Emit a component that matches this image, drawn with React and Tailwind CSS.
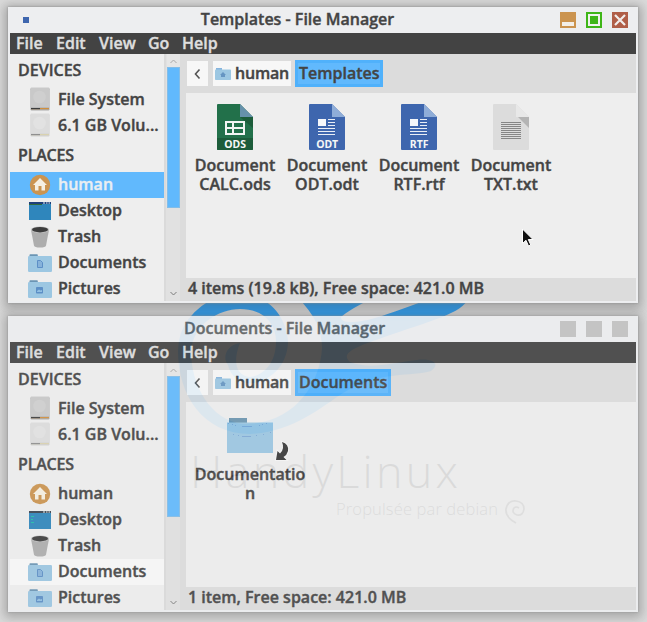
import React from "react";

function DriveIcon({ usb }) {
  return (
    <svg width="20" height="24" viewBox="0 0 20 24">
      <rect x="0.5" y="1" width="19" height="22.5" rx="1.2" fill={usb ? "#d2d2d2" : "#a9a9a9"} />
      <rect x="0.5" y="0.5" width="19" height="20" rx="1.2" fill={usb ? "#dcdcdc" : "#c9c9c9"} />
      <circle cx="9.5" cy="10" r="6.3" fill={usb ? "#e2e2e2" : "#cfcfcf"} />
      <rect x="1" y="21" width="18" height="1.2" fill={usb ? "#d9d2b0" : "#d08f3e"} />
      <rect x="1" y="21" width="9" height="1.2" fill={usb ? "#8f8f8f" : "#3c3c3c"} />
    </svg>
  );
}

function HomeIcon() {
  return (
    <svg width="22" height="22" viewBox="0 0 22 22">
      <circle cx="11" cy="11" r="10.2" fill="#cb9450" />
      <path d="M11 4L18 11H16V16.5H12.5V12H9.5V16.5H6V11H4Z" fill="#f6f0e2" />
    </svg>
  );
}

function DesktopIcon({ lines }) {
  return (
    <svg width="22" height="18" viewBox="0 0 22 18">
      <rect width="22" height="18" fill="#2f86bc" />
      <rect width="22" height="2" fill={lines ? "#3b4450" : "#1d3f7a"} />
      <path d="M14 1h2M17 1h1.5M19.5 1h1.5" stroke="#e8eef2" strokeWidth="1" />
      {lines ? <path d="M2 5.5h3M2 8.5h2M2 11.5h3" stroke="#1fbfa8" strokeWidth="1" /> : <path d="M0 2.5h13" stroke="#2f6b3a" strokeWidth="1" />}
    </svg>
  );
}

function TrashIcon() {
  return (
    <svg width="20" height="22" viewBox="0 0 20 22">
      <path d="M1 4L4 19.5Q4.5 21.5 10 21.5Q15.500 21.5 16 19.500L19 4Z" fill="#adadad" />
      <ellipse cx="10" cy="3.700" rx="9.200" ry="3.200" fill="#c2c2c2" />
      <ellipse cx="10" cy="3.700" rx="8" ry="2.700" fill="#3d3d3d" />
    </svg>
  );
}

function FolderIcon({ kind }) {
  return (
    <svg width="24" height="18" viewBox="0 0 24 18">
      <path d="M1.500 3V1Q1.500 0.300 2.200 0.300H9Q9.800 0.300 9.800 1V3Z" fill="#6b95b4" />
      <rect x="0" y="2" width="24" height="16" rx="1.200" fill="#9cc7e2" />
      {kind === "doc" ? (
        <path d="M9.500 6.500H12.500L14.500 8.500V13.500H9.500Z" fill="#86b2da" stroke="#5c8fc6" />
      ) : (
        <g>
          <rect x="8" y="7" width="7" height="6.500" rx="0.800" fill="#5c8fc6" />
          <path d="M9 11L11 9.500L12.500 10.500L14 10V12H9Z" fill="#91bfe2" />
        </g>
      )}
    </svg>
  );
}

const SIDE = [
  ["File System", () => <DriveIcon />],
  ["6.1 GB Volu...", () => <DriveIcon usb />],
];

const PLACES = [
  ["human", () => <HomeIcon />],
  ["Desktop", (lines) => <DesktopIcon lines={lines} />],
  ["Trash", () => <TrashIcon />],
  ["Documents", () => <FolderIcon kind="doc" />],
  ["Pictures", () => <FolderIcon kind="pic" />],
];

function Row({ label, icon, className = "", labelClass = "pb-[2px]" }) {
  return (
    <div className={`flex h-[26px] shrink-0 items-center ${className}`}>
      <span className="ml-[18px] flex w-6 shrink-0 items-center justify-center">{icon}</span>
      <span className={`ml-[6px] whitespace-nowrap ${labelClass}`}>{label}</span>
    </div>
  );
}

function Controls({ active }) {
  if (!active) {
    return (
      <div className="flex gap-[10px]">
        <span className="size-4 bg-[#c2c2c2]" />
        <span className="size-4 bg-[#c2c2c2]" />
        <span className="size-4 bg-[#c2c2c2]" />
      </div>
    );
  }
  return (
    <div className="flex gap-[10px]">
      <span className="flex size-4 items-end bg-[#cb9450] p-[2px]">
        <span className="h-1 w-full bg-[#f3efe9]" />
      </span>
      <span className="size-4 bg-[#3fb618] p-[2px]">
        <span className="block size-3 bg-[#f0f3ee] p-[2px]">
          <span className="block size-2 bg-[#3fb618]" />
        </span>
      </span>
      <svg width="16" height="16" className="bg-[#b05e48]">
        <path d="M3 3L13 13M13 3L3 13" stroke="#f2eeec" strokeWidth="2.200" />
      </svg>
    </div>
  );
}

function FileIcon({ type }) {
  const green = type === "ODS";
  const txt = type === "TXT";
  const base = green ? "#22704a" : txt ? "#dcdcdc" : "#3e66ae";
  return (
    <svg width="36" height="46" viewBox="0 0 36 46" className="block [-webkit-text-stroke:0]">
      <path d="M1 0H23L36 13V45Q36 46 35 46H1Q0 46 0 45V1Q0 0 1 0Z" fill={base} />
      {green && <path d="M23 13H36V24Z" fill="#1c5c3a" />}
      {txt && <path d="M25 13H36V24Z" fill="#b4b4b4" />}
      {green && <path d="M0 34H36V45Q36 46 35 46H1Q0 46 0 45Z" fill="#1c5c3a" />}
      <path d="M23 0L36 13H23Z" fill={green ? "#6691ab" : txt ? "#e8e8e8" : "#8fadd8"} />
      {green && (
        <path fillRule="evenodd" fill="#f2f5f3" d="M8 17H28V31H8ZM10 19V23H15V19ZM17 19V23H26V19ZM10 25V29H15V25ZM17 25V29H26V25Z" />
      )}
      {!green && !txt && (
        <g>
          <rect x="9" y="15" width="8" height="7" fill="#f5f7fa" />
          <path d="M19 15.500H26M19 18.500H26M19 21.500H26M9 24.500H26M9 27.500H26M9 30.500H26" stroke="#e9eef6" />
        </g>
      )}
      {txt && (
        <path d="M8 18.500H28M8 20.500H28M8 22.500H28M8 24.500H28M8 26.500H28M8 28.500H28M8 30.500H28M8 32.500H28M8 34.500H28" stroke="#868686" />
      )}
      {!txt && (
        <text x="18.200" y="44" textAnchor="middle" fill="#f5f7f6" fontFamily="Noto Sans, sans-serif" fontWeight="700" fontSize="10.500">
          {type}
        </text>
      )}
    </svg>
  );
}

function FileItem({ lines, type }) {
  return (
    <div className="flex w-[92px] flex-col items-center">
      <FileIcon type={type} />
      <div className="mt-[6px] text-center leading-[19px]">
        {lines.map((l) => (
          <div key={l} className="whitespace-nowrap">{l}</div>
        ))}
      </div>
    </div>
  );
}

function LinkedFolder() {
  return (
    <div className="flex w-[110px] flex-col items-center">
      <div className="relative h-[46px] w-12">
        <svg width="48" height="36" viewBox="0 0 48 36" className="mt-[5px] block">
          <path d="M3 0H21V6H3Z" fill="#6b95af" />
          <rect x="1" y="4.500" width="46" height="30.500" fill="#9cc7e2" />
          <path d="M16 8.500H26M16 18.500H25" stroke="#7ea9d6" />
          <path d="M2 5.500h1M6 6.500h1M9 7.500h1M33 7.500h1M36 6.500h1M40 5.500h1M7 16.500h1M12 17.500h1M30 17.500h1M37 16.500h1M44 14.500h1" stroke="#7ea9d6" />
        </svg>
        <svg width="18" height="24" viewBox="0 0 18 24" className="absolute left-[48px] top-[27px]">
          <path d="M8 2Q15 4 14 11Q13 15 9.500 17L12.500 20H2L3.500 11L6 13.500Q11 9 8 2Z" fill="#383838" stroke="#f6f6f6" strokeWidth="2" paintOrder="stroke" />
        </svg>
      </div>
      <div className="mt-[6px] text-center leading-[19px]">
        <div>Documentatio</div>
        <div>n</div>
      </div>
    </div>
  );
}

function Scrollbar() {
  return (
    <div className="flex w-4 shrink-0 flex-col items-center border-l-2 border-[#dadada] bg-[#e1e1e1]">
      <svg width="13" height="13" className="shrink-0 bg-[#e6e6e6]" fill="none" stroke="#a9a9a9">
        <path d="M3.500 9L6.500 6L9.500 9" />
      </svg>
      <div className="h-[141px] w-[13px] shrink-0 border border-[#83bde8] bg-[#61b9fd]" />
      <div className="flex-1" />
      <svg width="13" height="13" className="shrink-0" fill="none" stroke="#7c7c7c">
        <path d="M3.500 4L6.500 7L9.500 4" />
      </svg>
    </div>
  );
}

function Window({ title, active, selected, path, pathWidth, status, children }) {
  return (
    <section
      className={`flex h-[296px] w-[630px] shrink-0 flex-col bg-[#edeef0] shadow-[0_0_2px_#8c8c8c,0_2px_10px_4px_rgba(70,70,70,0.36)] ${active ? "" : "opacity-[0.91]"}`}
    >
      <header className="flex h-[26px] shrink-0 items-center pl-[15px] pr-[10px]">
        <span className={`size-[6px] ${active ? "bg-[#3e66ae]" : ""}`} />
        <h1 className={`flex-1 whitespace-nowrap pb-[2px] text-center ${active ? "pl-[6px] text-[#444]" : "pl-[6px] pr-[26px] text-[#5d6163]"}`}>
          {title}
        </h1>
        <Controls active={active} />
      </header>
      <nav className="mx-[2px] flex h-[21px] shrink-0 items-center bg-[#434343] pb-[1px] text-[#dedede]">
        <span className="ml-[6px] w-10">File</span>
        <span className="w-[43px]">Edit</span>
        <span className="w-[49px]">View</span>
        <span className="w-[34px]">Go</span>
        <span>Help</span>
      </nav>
      <div className="mx-[2px] flex h-[247px] text-[#444]">
        <aside className="flex w-[154px] shrink-0 flex-col overflow-hidden bg-[#eee] pt-[3px]">
          <div className="mb-[3px] flex h-[26px] shrink-0 items-center pl-2">DEVICES</div>
          {SIDE.map(([label, icon]) => (
            <Row key={label} label={label} icon={icon()} labelClass="pb-0" />
          ))}
          <div className="flex h-[34px] shrink-0 items-center pl-2 tracking-[-0.200px]">PLACES</div>
          {PLACES.map(([label, icon]) => (
            <Row
              key={label}
              label={label}
              icon={icon(!active)}
              className={label !== selected ? "" : active ? "bg-[#61b9fd] text-[#e9eef2]" : "bg-[#f8f8f8]"}
            />
          ))}
        </aside>
        <Scrollbar />
        <main className="flex flex-1 flex-col bg-[#dcdcdc] pl-[6px]">
          <div className="flex h-[39px] shrink-0 items-center pl-[1px]">
            <span className="flex h-[25px] w-[21px] items-center justify-center bg-[#f7f7f7]">
              <svg width="8" height="12" fill="none" stroke="#555" strokeWidth="1.600">
                <path d="M5.500 1.500L1.500 6L5.500 10.500" />
              </svg>
            </span>
            <span className="ml-[5px] flex h-[25px] w-[78px] items-center bg-[#f7f7f7] pl-[2px]">
              <svg width="16" height="12" viewBox="0 0 16 12" className="shrink-0">
                <path d="M1 2V0H7V2Z" fill="#86b4de" />
                <rect y="1.500" width="16" height="10.500" rx="0.800" fill="#9cc7e2" />
                <path d="M8 4L11 7H10V9H6V7H5Z" fill="#6595c2" />
              </svg>
              <span className="ml-[4px] pb-[1px] tracking-[-0.200px]">human</span>
            </span>
            <span className={`ml-[4px] flex h-[27px] items-center whitespace-nowrap border-[3px] border-[#50b1fb] bg-[#61b9fd] pb-[1px] pl-[1px] ${pathWidth}`}>{path}</span>
          </div>
          <div className="h-[185px] shrink-0 bg-[#eee] pt-[11px]">{children}</div>
          <div className="h-[23px] whitespace-nowrap pl-[2px] leading-[21px]">{status}</div>
        </main>
      </div>
    </section>
  );
}

function Wallpaper() {
  return (
    <svg width="647" height="622" viewBox="0 0 647 622" className="absolute inset-0 [-webkit-text-stroke:0]">
      <g fill="#30a2f6">
        <path
          fillRule="evenodd"
          d="M220 295Q178 315 178 351C178 395 203 434 250 434C293 432 320 408 343 393C380 370 412 377 431 371C441 364 433 358 417 360C390 363 370 370 350 362C338 352 362 345 390 335C440 318 465 312 470 295H440Q400 310 382 316C360 323 340 325 341 317Q350 309 375 297H297C315 315 322 330 322 348C320 385 293 425 243 424C210 420 191 385 191 351C193 325 218 309 240 309C264 309 276 324 276 341C276 362 265 375 250 377C235 376 233 360 240 343C226 345 222 358 228 365C232 383 250 386 262 381C284 371 288 352 288 341C286 315 268 298 250 295Z"
        />
      </g>
      <text x="190" y="488" fontFamily="Open Sans, sans-serif" fontWeight="300" fontSize="45" fill="#101010" textLength="268">
        HandyLinux
      </text>
      <text x="336" y="515" fontFamily="Open Sans, sans-serif" fontWeight="300" fontSize="16.500" fill="#202020" textLength="162">
        Propulsée par debian
      </text>
      <path d="M516 523Q505 517 506 509Q508 500 516 501Q524 502 524 509Q523 516 517 515Q511 513 514 508Q516 506 519 508" fill="none" stroke="#404040" strokeWidth="1.700" />
    </svg>
  );
}

export default function App() {
  return (
    <div className="relative h-[622px] w-[647px] overflow-hidden bg-[#dcdcdc] font-['Open_Sans','Noto_Sans',sans-serif] text-[16px] font-semibold [-webkit-text-stroke:0.4px]">
      <Wallpaper />
      <div className="relative flex flex-col gap-[13px] pl-2 pt-[7px]">
        <Window
          active
          title="Templates - File Manager"
          selected="human"
          path="Templates"
          pathWidth="w-[88px]"
          status="4 items (19.8 kB), Free space: 421.0 MB"
        >
          <div className="flex pl-[3px]">
            <FileItem type="ODS" lines={["Document", "CALC.ods"]} />
            <FileItem type="ODT" lines={["Document", "ODT.odt"]} />
            <FileItem type="RTF" lines={["Document", "RTF.rtf"]} />
            <FileItem type="TXT" lines={["Document", "TXT.txt"]} />
          </div>
        </Window>
        <Window
          title="Documents - File Manager"
          selected="Documents"
          path="Documents"
          pathWidth="w-[96px]"
          status="1 item, Free space: 421.0 MB"
        >
          <div className="flex pl-[9px]">
            <LinkedFolder />
          </div>
        </Window>
      </div>
      <svg width="14" height="20" viewBox="0 0 14 20" className="absolute left-[521px] top-[228px]">
        <path d="M1.500 1V15.500L5 12.300L7.500 18L9.800 17L7.300 11.500H12Z" fill="#111" stroke="#fff" strokeWidth="1" />
      </svg>
    </div>
  );
}
